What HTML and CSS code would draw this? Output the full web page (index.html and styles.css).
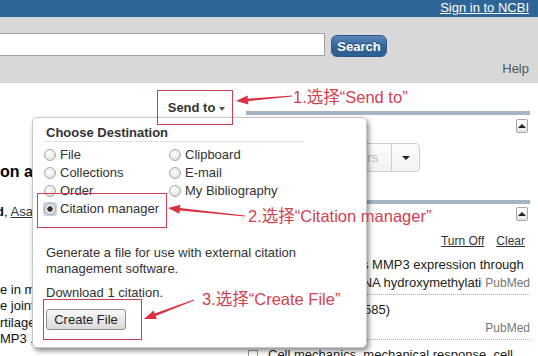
FILE: index.html
```html
<!DOCTYPE html>
<html lang="zh-CN">
<head>
<meta charset="utf-8">
<title>PubMed - Send to</title>
<link rel="stylesheet" href="styles.css">
</head>
<body>
<header class="topbar"><a class="signin" href="#">Sign in to NCBI</a></header>
<section class="searchband">
  <div class="searchrow">
    <input class="query" type="text" value="">
    <button class="searchbtn" type="button">Search</button>
  </div>
  <div class="helprow"><a class="help" href="#">Help</a></div>
</section>
<main class="content">
  <div class="leftcol">
    <div class="toolbar"><span class="sendto">Send to <i class="caret"></i></span></div>
    <h1 class="title">on and cartilage degradation</h1>
    <p class="authors"><b>d</b>, <u>Asa</u>hara H.</p>
    <p class="abstract">e in mice<br>e joint<br>rtilage<br>MP3 ,</p>
  </div>
  <aside class="rightcol">
    <div class="bar"></div>
    <div class="panel">
      <div class="panelhead"><span class="toggle"></span></div>
      <div class="dropdown"><span class="dd-main">Filters</span><span class="dd-caret"><i class="caret dark"></i></span></div>
    </div>
    <div class="bar"></div>
    <div class="panel">
      <div class="panelhead second"><span class="toggle"></span></div>
      <div class="links"><a href="#">Turn Off</a><a href="#">Clear</a></div>
      <ul class="hist">
        <li class="item">
          <span class="cb"></span>
          <div class="itext">
            <div class="ititle">Mechanical loads MMP3 expression through</div>
            <div class="irow"><span class="clip">thus regulates DNA hydroxymethylation of the promoter</span><span class="src">PubMed</span></div>
          </div>
        </li>
        <li class="item">
          <span class="cb"></span>
          <div class="itext">
            <div class="ititle">Cartilage. 2019 (585)</div>
            <div class="irow"><span class="clip"></span><span class="src">PubMed</span></div>
          </div>
        </li>
        <li class="item">
          <span class="cb"></span>
          <div class="itext">
            <div class="ititle">Cell mechanics, mechanical response, cell</div>
          </div>
        </li>
      </ul>
    </div>
  </aside>
  <div class="popup">
    <h2 class="ptitle">Choose Destination</h2>
    <div class="dest">
      <label class="opt"><span class="rwrap"><span class="radio"></span></span>File</label>
      <label class="opt"><span class="rwrap"><span class="radio"></span></span>Clipboard</label>
      <label class="opt"><span class="rwrap"><span class="radio"></span></span>Collections</label>
      <label class="opt"><span class="rwrap"><span class="radio"></span></span>E-mail</label>
      <label class="opt"><span class="rwrap"><span class="radio"></span></span>Order</label>
      <label class="opt"><span class="rwrap"><span class="radio"></span></span>My Bibliography</label>
      <label class="opt on"><span class="rwrap"><span class="radio"></span></span>Citation manager</label>
    </div>
    <p class="desc">Generate a file for use with external citation<br>management software.</p>
    <p class="dl">Download 1 citation.</p>
    <button class="createbtn" type="button">Create File</button>
  </div>
</main>
<div class="annot">
  <div class="box b1"></div>
  <div class="box b2"></div>
  <div class="box b3"></div>
  <div class="note n1">1.选择“Send to”</div>
  <div class="note n2">2.选择“Citation manager”</div>
  <div class="note n3">3.选择“Create File”</div>
  <svg class="arrows" viewBox="0 0 538 356" width="538" height="356">
    <polygon points="291.96,95.5 247.83,98.64 247.55,95.45 236,101 248.35,104.4 248.07,101.2 292.04,96.5"/>
    <polygon points="245.05,215.5 180.0,207.9 180.4,204.7 168,208 179.4,213.7 179.8,210.5 244.95,216.5"/>
    <polygon points="193.8,299.5 154.7,313.5 153.6,310.5 144,319 156.8,318.9 155.7,315.9 194.2,300.5"/>
  </svg>
</div>
</body>
</html>
```
FILE: styles.css
```css
* { box-sizing: border-box; }
html, body { margin: 0; padding: 0; }
body {
  width: 538px;
  height: 356px;
  overflow: hidden;
  position: relative;
  background: #fff;
  font-family: "Liberation Sans", Arial, sans-serif;
  font-size: 13px;
  color: #222;
}

/* top bar */
.topbar {
  height: 17px;
  background: #2f6497;
  text-align: right;
  padding-right: 9px;
  overflow: hidden;
}
.signin {
  display: inline-block;
  color: #fff;
  font-size: 13px;
  line-height: 13px;
  text-decoration: underline;
}

/* search band */
.searchband {
  height: 66px;
  background: #d8d8d8;
  padding-top: 16px;
}
.searchrow {
  display: flex;
  align-items: flex-start;
  gap: 6px;
}
.query {
  width: 328px;
  height: 23px;
  margin: 0 0 0 -3px;
  padding: 0;
  border: 1px solid #a2a2a2;
  background: #fff;
}
.searchbtn {
  margin-top: 2px;
  width: 56px;
  height: 22px;
  padding: 0;
  border: 1px solid #2b5a88;
  border-radius: 6px;
  background: linear-gradient(#5a88b8, #30659a 55%, #2c5f92);
  color: #fff;
  font-family: "Liberation Sans", Arial, sans-serif;
  font-weight: bold;
  font-size: 13px;
  text-shadow: 0 -1px 0 rgba(0,0,0,.35);
}
.helprow {
  margin-top: 4px;
  text-align: right;
  padding-right: 9px;
  line-height: 15px;
}
.help { color: #555; text-decoration: none; }

/* content */
.content {
  position: relative;
  display: flex;
  height: 273px;
}
.leftcol {
  width: 246px;
  flex: none;
  overflow: hidden;
}
.toolbar {
  padding: 16px 21px 0 0;
  text-align: right;
  line-height: 18px;
}
.sendto { font-weight: bold; color: #333; }
.caret {
  display: inline-block;
  width: 0;
  height: 0;
  border-left: 3.5px solid transparent;
  border-right: 3.5px solid transparent;
  border-top: 4px solid #555;
  vertical-align: middle;
}
.caret.dark { border-top-color: #222; border-left-width: 4px; border-right-width: 4px; }
.title {
  margin: 45px 0 0;
  font-size: 16px;
  line-height: 20px;
  font-weight: bold;
  white-space: nowrap;
  color: #000;
}
.authors {
  margin: 21px 0 0;
  line-height: 18px;
  white-space: nowrap;
  text-indent: -4px;
  color: #111;
}
.authors u { color: #333; }
.abstract {
  margin: 61px 0 0;
  line-height: 16.3px;
  white-space: nowrap;
  color: #111;
}

/* right column */
.rightcol {
  width: 284px;
  flex: none;
  padding-top: 28px;
}
.bar { height: 4px; background: #a4b4c3; }
.panelhead {
  display: flex;
  justify-content: flex-end;
  padding: 4px 2px 0 0;
}
.panelhead.second { padding-top: 3px; }
.toggle {
  width: 12px;
  height: 14px;
  border: 1px solid #a8a8a8;
  border-radius: 2px;
  background: linear-gradient(#fff, #e4e4e4);
  display: flex;
  align-items: center;
  justify-content: center;
}
.toggle::before {
  content: "";
  width: 0;
  height: 0;
  border-left: 4px solid transparent;
  border-right: 4px solid transparent;
  border-bottom: 4px solid #222;
}
.dropdown {
  display: flex;
  margin: 10px 0 28px 54px;
  width: 120px;
  height: 29px;
  border: 1px solid #cfcfcf;
  border-radius: 4px;
  background: linear-gradient(#fdfdfd, #f2f2f2);
}
.dd-main {
  width: 91px;
  border-right: 1px solid #cfcfcf;
  text-align: right;
  padding-right: 13px;
  line-height: 27px;
  color: #bbb;
}
.dd-caret {
  flex: 1;
  display: flex;
  align-items: center;
  justify-content: center;
}
.links {
  margin-top: 10.5px;
  text-align: right;
  line-height: 18px;
  font-size: 12px;
  padding-right: 5px;
}
.links a { color: #333; text-decoration: underline; margin-left: 12px; }
.hist { list-style: none; margin: 0; padding: 0; }
.item { display: flex; gap: 10px; padding-left: 2px; }
.cb {
  flex: none;
  width: 10px;
  height: 10px;
  margin-top: 10px;
  border: 1px solid #999;
  background: #fff;
}
.itext {
  flex: 1;
  min-width: 0;
  padding: 6px 0 2px;
  border-bottom: 1px dotted #aaa;
}
.ititle { line-height: 18px; white-space: nowrap; overflow: hidden; color: #222; }
.irow { display: flex; line-height: 18px; }
.clip { flex: 1; min-width: 0; white-space: nowrap; overflow: hidden; }
.src { font-size: 12px; color: #777; padding-left: 3px; }

/* popup */
.popup {
  position: absolute;
  left: 32px;
  top: 34px;
  width: 335px;
  height: 231px;
  background: #fff;
  border: 1px solid #c8c8c8;
  border-radius: 5px;
  box-shadow: 2px 3px 5px rgba(0,0,0,.45);
  padding: 7px 10px 0;
  color: #333;
  z-index: 5;
}
.ptitle {
  margin: 0;
  width: 261px;
  padding-left: 3px;
  font-size: 13px;
  line-height: 16px;
  font-weight: bold;
  color: #333;
  border-bottom: 1px solid #e2e2e2;
}
.dest {
  display: grid;
  grid-template-columns: 125px auto;
  margin-top: 4px;
  line-height: 18px;
}
.opt { display: flex; align-items: center; gap: 3px; }
.rwrap {
  width: 14px;
  height: 14px;
  border-radius: 2px;
  display: flex;
  align-items: center;
  justify-content: center;
}
.radio {
  width: 12px;
  height: 12px;
  border-radius: 50%;
  border: 1px solid #a8a8a8;
  background: radial-gradient(circle at 40% 35%, #fff, #d8d8d8);
}
.opt.on .rwrap { background: #c6d5ea; }
.opt.on .radio { background: radial-gradient(circle, #333 0 2.4px, #e2e2e2 3px, #fafafa); }
.desc { margin: 27px 0 0; padding-left: 3px; line-height: 16px; }
.dl { margin: 8px 0 0; padding-left: 3px; line-height: 16px; }
.createbtn {
  display: block;
  margin: 8px 0 0 3px;
  width: 80px;
  height: 21px;
  padding: 0;
  border: 1px solid #8e8e8e;
  border-radius: 3px;
  background: linear-gradient(#f8f8f8, #dadada);
  font-family: "Liberation Sans", Arial, sans-serif;
  font-size: 13px;
  color: #222;
}

/* annotations overlay */
.annot { position: absolute; left: 0; top: 0; width: 538px; height: 356px; pointer-events: none; z-index: 10; }
.box { position: absolute; border: 1px solid #c9404e; }
.b1 { left: 157px; top: 90px; width: 76px; height: 35px; }
.b2 { left: 37px; top: 193px; width: 130px; height: 35px; }
.b3 { left: 43px; top: 299px; width: 99px; height: 41px; }
.note {
  position: absolute;
  color: #d3414e;
  font-family: "Liberation Sans", "Noto Sans CJK SC", sans-serif;
  font-size: 16.5px;
  line-height: 20px;
  white-space: nowrap;
}
.n1 { left: 293px; top: 87px; }
.n2 { left: 248px; top: 206px; }
.n3 { left: 202px; top: 289px; }
.arrows { position: absolute; left: 0; top: 0; fill: #d9333f; }
```
